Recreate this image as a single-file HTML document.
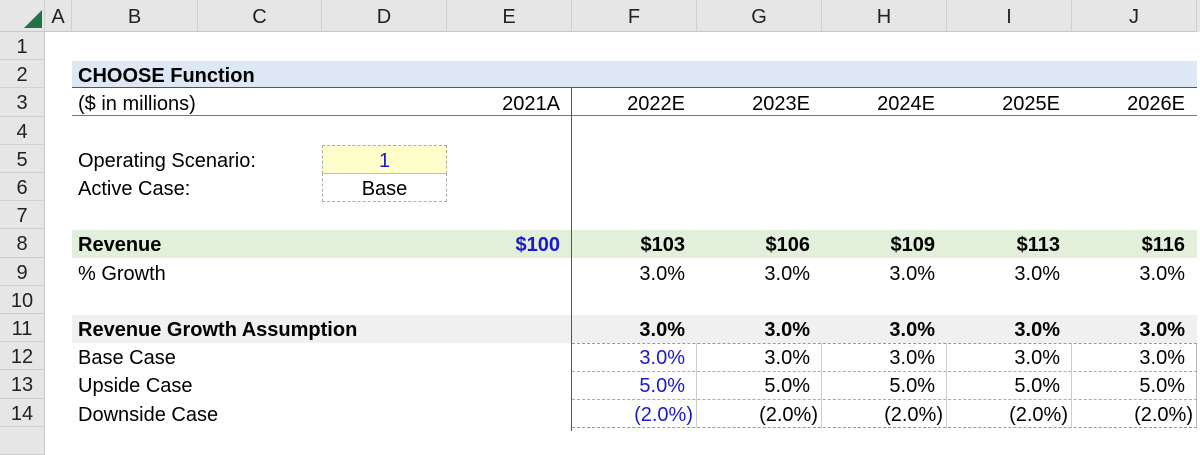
<!DOCTYPE html>
<html><head><meta charset="utf-8"><style>
body{margin:0;width:1200px;height:431px;overflow:hidden;background:#fff;font-family:"Liberation Sans",Arial,sans-serif;font-size:20px;color:#000;position:relative}
div{position:absolute;box-sizing:border-box}
.hd{top:0;height:32px;background:#e6e6e6;color:#222;text-align:center;line-height:34px;border-right:1px solid #d0d0d0;border-bottom:1px solid #c8c8c8;font-size:20px}
.rh{left:0;width:45px;height:28.2px;background:#e6e6e6;color:#222;text-align:center;line-height:30px;border-bottom:1px solid #d0d0d0;border-right:1px solid #c8c8c8;font-size:20px}
.t{height:28.2px;line-height:32px;white-space:nowrap}
.r{text-align:right;padding-right:12px;width:125px}
.b{font-weight:bold}
.bl{color:#1a1acc}
</style></head><body>
<div class="hd" style="left:0;width:45px"></div>
<div style="left:24px;top:10px;width:0;height:0;border-left:18px solid transparent;border-bottom:18px solid #217346"></div>
<div class="hd" style="left:45px;width:27px">A</div>
<div class="hd" style="left:72px;width:126px">B</div>
<div class="hd" style="left:198px;width:124px">C</div>
<div class="hd" style="left:322px;width:125px">D</div>
<div class="hd" style="left:447px;width:125px">E</div>
<div class="hd" style="left:572px;width:125px">F</div>
<div class="hd" style="left:697px;width:125px">G</div>
<div class="hd" style="left:822px;width:125px">H</div>
<div class="hd" style="left:947px;width:125px">I</div>
<div class="hd" style="left:1072px;width:125px">J</div>
<div class="hd" style="left:1197px;width:3px;border:none"></div>

<div class="rh" style="top:32px">1</div>
<div class="rh" style="top:60.2px">2</div>
<div class="rh" style="top:88.4px">3</div>
<div class="rh" style="top:116.6px">4</div>
<div class="rh" style="top:144.8px">5</div>
<div class="rh" style="top:173px">6</div>
<div class="rh" style="top:201.2px">7</div>
<div class="rh" style="top:229.4px">8</div>
<div class="rh" style="top:257.6px">9</div>
<div class="rh" style="top:285.8px">10</div>
<div class="rh" style="top:314px">11</div>
<div class="rh" style="top:342.2px">12</div>
<div class="rh" style="top:370.4px">13</div>
<div class="rh" style="top:398.6px">14</div>
<div class="rh" style="top:426.8px"></div>

<div style="left:72px;top:60.5px;width:1125px;height:27.5px;background:#dde8f4;border-bottom:1px solid #555"></div>
<div class="t b" style="left:78px;top:60.2px">CHOOSE Function</div>
<div style="left:72px;top:115px;width:1125px;height:1px;background:#777"></div>
<div class="t" style="left:78px;top:88.4px">($ in millions)</div>
<div class="t r" style="left:447px;top:88.4px">2021A</div>
<div class="t r" style="left:572px;top:88.4px">2022E</div>
<div class="t r" style="left:697px;top:88.4px">2023E</div>
<div class="t r" style="left:822px;top:88.4px">2024E</div>
<div class="t r" style="left:947px;top:88.4px">2025E</div>
<div class="t r" style="left:1072px;top:88.4px">2026E</div>
<div style="left:571px;top:88px;width:1px;height:343px;background:#555"></div>

<div class="t" style="left:78px;top:144.8px">Operating Scenario:</div>
<div class="t" style="left:78px;top:173px">Active Case:</div>
<div style="left:322px;top:145px;width:125px;height:29px;background:#ffffcc;border:1px dashed #aaa"></div>
<div style="left:322px;top:173px;width:125px;height:29px;border:1px dashed #aaa;border-top:1px solid #bbb"></div>
<div class="t bl" style="left:322px;top:144.8px;width:125px;text-align:center">1</div>
<div class="t" style="left:322px;top:173px;width:125px;text-align:center">Base</div>

<div style="left:72px;top:230px;width:1125px;height:28px;background:#e2efda"></div>
<div class="t b" style="left:78px;top:229.4px">Revenue</div>
<div class="t r b bl" style="left:447px;top:229.4px">$100</div>
<div class="t r b" style="left:572px;top:229.4px">$103</div>
<div class="t r b" style="left:697px;top:229.4px">$106</div>
<div class="t r b" style="left:822px;top:229.4px">$109</div>
<div class="t r b" style="left:947px;top:229.4px">$113</div>
<div class="t r b" style="left:1072px;top:229.4px">$116</div>
<div style="left:571px;top:229px;width:1px;height:30px;background:#555"></div>
<div class="t" style="left:78px;top:257.6px">% Growth</div>
<div class="t r" style="left:572px;top:257.6px">3.0%</div>
<div class="t r" style="left:697px;top:257.6px">3.0%</div>
<div class="t r" style="left:822px;top:257.6px">3.0%</div>
<div class="t r" style="left:947px;top:257.6px">3.0%</div>
<div class="t r" style="left:1072px;top:257.6px">3.0%</div>

<div style="left:72px;top:314.5px;width:1125px;height:28px;background:#f0f0f0"></div>
<div style="left:571px;top:314px;width:1px;height:30px;background:#555"></div>
<div class="t b" style="left:78px;top:314px">Revenue Growth Assumption</div>
<div class="t r b" style="left:572px;top:314px">3.0%</div>
<div class="t r b" style="left:697px;top:314px">3.0%</div>
<div class="t r b" style="left:822px;top:314px">3.0%</div>
<div class="t r b" style="left:947px;top:314px">3.0%</div>
<div class="t r b" style="left:1072px;top:314px">3.0%</div>

<div style="left:572px;top:342.5px;width:625px;height:85px;border-top:1px dashed #999;border-right:1px solid #bbb;border-bottom:1px dashed #999"></div>
<div style="left:572px;top:370.6px;width:625px;height:0;border-top:1px dashed #aaa"></div>
<div style="left:572px;top:398.8px;width:625px;height:0;border-top:1px dashed #aaa"></div>
<div style="left:696px;top:342.5px;width:0;height:85px;border-left:1px solid #ccc"></div>
<div style="left:821px;top:342.5px;width:0;height:85px;border-left:1px solid #ccc"></div>
<div style="left:946px;top:342.5px;width:0;height:85px;border-left:1px solid #ccc"></div>
<div style="left:1071px;top:342.5px;width:0;height:85px;border-left:1px solid #ccc"></div>

<div class="t" style="left:78px;top:342.2px">Base Case</div>
<div class="t r bl" style="left:572px;top:342.2px">3.0%</div>
<div class="t r" style="left:697px;top:342.2px">3.0%</div>
<div class="t r" style="left:822px;top:342.2px">3.0%</div>
<div class="t r" style="left:947px;top:342.2px">3.0%</div>
<div class="t r" style="left:1072px;top:342.2px">3.0%</div>

<div class="t" style="left:78px;top:370.4px">Upside Case</div>
<div class="t r bl" style="left:572px;top:370.4px">5.0%</div>
<div class="t r" style="left:697px;top:370.4px">5.0%</div>
<div class="t r" style="left:822px;top:370.4px">5.0%</div>
<div class="t r" style="left:947px;top:370.4px">5.0%</div>
<div class="t r" style="left:1072px;top:370.4px">5.0%</div>

<div class="t" style="left:78px;top:398.6px">Downside Case</div>
<div class="t r bl" style="left:572px;top:398.6px;padding-right:4px">(2.0%)</div>
<div class="t r" style="left:697px;top:398.6px;padding-right:4px">(2.0%)</div>
<div class="t r" style="left:822px;top:398.6px;padding-right:4px">(2.0%)</div>
<div class="t r" style="left:947px;top:398.6px;padding-right:4px">(2.0%)</div>
<div class="t r" style="left:1072px;top:398.6px;padding-right:4px">(2.0%)</div>
</body></html>
